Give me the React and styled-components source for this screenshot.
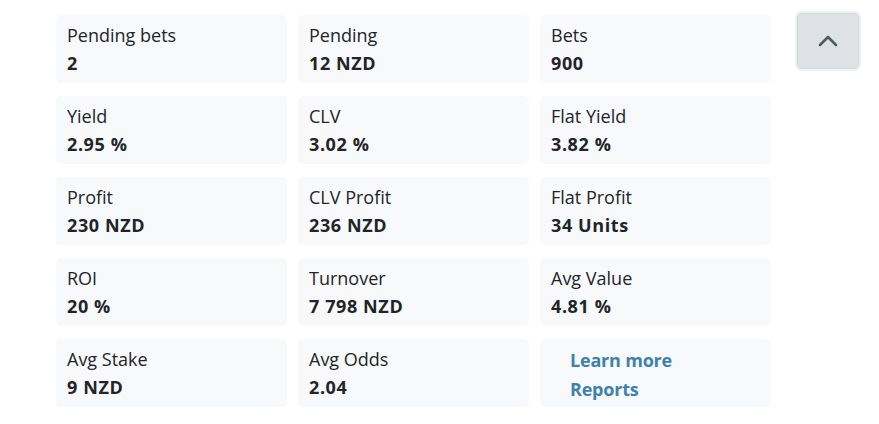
import React from 'react'
import styled, { createGlobalStyle } from 'styled-components'

const GlobalStyle = createGlobalStyle`
  body {
    margin: 0;
    background: #fff;
    font-family: "Open Sans", "Noto Sans", sans-serif;
    color: #212529;
  }
`

const Page = styled.div`
  display: flex;
  align-items: flex-start;
  padding: 15px 0 0 56px;
  gap: 26px;
`

const Grid = styled.div`
  display: grid;
  grid-template-columns: repeat(3, 231px);
  column-gap: 11px;
  row-gap: 13px;
`

const Card = styled.div`
  background: #f8f9fa;
  border-radius: 5px;
  height: 68px;
  box-sizing: border-box;
  padding: 7px 11px;
  display: flex;
  flex-direction: column;
`

const Label = styled.div`
  font-size: 18px;
  line-height: 26px;
`

const Value = styled.div`
  font-size: 18px;
  font-weight: 700;
  letter-spacing: 0.6px;
  line-height: 31px;
`

const Links = styled.ul`
  list-style: none;
  margin: 0;
  padding: 0 0 0 19px;
`

const LinkItem = styled.li`
  font-size: 18px;
  font-weight: 700;
  letter-spacing: -0.2px;
  line-height: 29px;
  a {
    color: #3d82ad;
    text-decoration: none;
  }
`

const ScrollButton = styled.button`
  margin-top: -2px;
  width: 62px;
  height: 56px;
  border: 1px solid #d3d8dd;
  border-radius: 5px;
  background: #dee2e6;
  box-shadow: 0 0 0 2px #eef0f2;
  display: flex;
  align-items: center;
  justify-content: center;
  padding: 0;
  cursor: pointer;
`

const stats = [
  ['Pending bets', '2'],
  ['Pending', '12 NZD'],
  ['Bets', '900'],
  ['Yield', '2.95 %'],
  ['CLV', '3.02 %'],
  ['Flat Yield', '3.82 %'],
  ['Profit', '230 NZD'],
  ['CLV Profit', '236 NZD'],
  ['Flat Profit', '34 Units'],
  ['ROI', '20 %'],
  ['Turnover', '7 798 NZD'],
  ['Avg Value', '4.81 %'],
  ['Avg Stake', '9 NZD'],
  ['Avg Odds', '2.04'],
]

const App = () => (
  <>
    <GlobalStyle />
    <Page>
      <Grid>
        {stats.map(([label, value]) => (
          <Card key={label}>
            <Label>{label}</Label>
            <Value>{value}</Value>
          </Card>
        ))}
        <Card>
          <Links>
            <LinkItem><a href="#learn">Learn more</a></LinkItem>
            <LinkItem><a href="#reports">Reports</a></LinkItem>
          </Links>
        </Card>
      </Grid>
      <ScrollButton aria-label="Scroll to top">
        <svg width="20" height="12" viewBox="0 0 20 12" fill="none">
          <path d="M2 10 L10 2 L18 10" stroke="#4f5b66" strokeWidth="2.6" strokeLinecap="round" strokeLinejoin="round" />
        </svg>
      </ScrollButton>
    </Page>
  </>
)

export default App
